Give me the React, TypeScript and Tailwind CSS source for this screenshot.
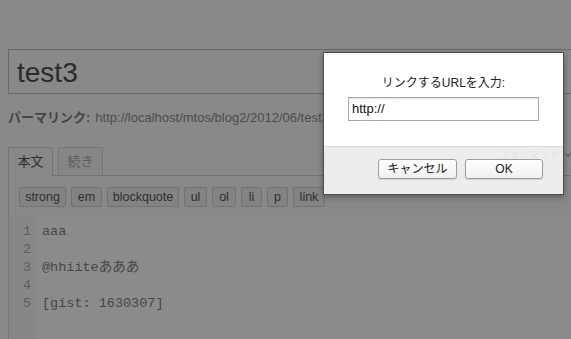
import React from "react";

const tools = [
  { label: "strong", w: "w-[47px]" },
  { label: "em", w: "w-[31px]" },
  { label: "blockquote", w: "w-[72px]" },
  { label: "ul", w: "w-[23px]" },
  { label: "ol", w: "w-[24px]" },
  { label: "li", w: "w-[21px]" },
  { label: "p", w: "w-[21px]" },
  { label: "link", w: "w-[32px]" },
];

const lines = [
  { n: 1, text: "aaa" },
  { n: 2, text: "" },
  { n: 3, text: "@hhiiteあああ" },
  { n: 4, text: "" },
  { n: 5, text: "[gist: 1630307]" },
];

const App = () => {
  return (
    <div
      className="relative w-[571px] h-[339px] overflow-hidden bg-[#898989]"
      style={{ fontFamily: '"Liberation Sans", "Noto Sans CJK JP", sans-serif' }}
    >
      <div className="pl-[8px] pt-[49px]">
        {/* title */}
        <div className="w-[620px] h-[45px] border border-[#6a6a6a] pl-[8px] flex items-center">
          <span className="text-[28px] leading-none text-[#2b2b2b] mt-[2px]">test3</span>
        </div>

        {/* permalink */}
        <div className="mt-[16px] h-[16px] flex items-center text-[13px] whitespace-nowrap">
          <span className="font-bold text-[#464646]">パーマリンク:</span>
          <span className="ml-[5px] text-[#4c4c4c]">http://localhost/mtos/blog2/2012/06/test3.html</span>
        </div>

        {/* tabs */}
        <div className="mt-[20px] flex items-end gap-[5px] h-[29px]">
          <div className="h-[29px] w-[45px] -mb-px relative z-10 border border-b-0 border-[#737373] rounded-t-[2px] bg-[#888888] flex items-center justify-center text-[13px] text-[#2f2f2f]">
            本文
          </div>
          <div className="h-[28px] w-[45px] border border-b-0 border-[#767676] rounded-t-[2px] bg-[#868686] flex items-center justify-center text-[13px] text-[#5c5c5c]">
            続き
          </div>
        </div>

        {/* panel */}
        <div className="border-t border-l border-[#737373] bg-[#888888] w-[620px]">
          <div className="pl-[10px] pt-[11px] pb-[9px] flex gap-[5px]">
            {tools.map((t) => (
              <div
                key={t.label}
                className={`${t.w} h-[20px] flex items-center justify-center border border-[#727272] rounded-[2px] bg-[#838383] text-[12.5px] text-[#2f2f2f]`}
              >
                {t.label}
              </div>
            ))}
          </div>
          <div className="flex h-[130px] bg-[#8b8b8b]">
            <div
              className="w-[27px] bg-[#878787] pt-[7px] pr-[5px] text-right text-[13.5px] leading-[18px] text-[#5f5f5f]"
              style={{ fontFamily: '"Liberation Mono", monospace' }}
            >
              {lines.map((l) => (
                <div key={l.n}>{l.n}</div>
              ))}
            </div>
            <div
              className="pl-[6px] pt-[7px] text-[13.5px] leading-[18px] text-[#474747]"
              style={{ fontFamily: '"Liberation Mono", "Noto Sans CJK JP", monospace' }}
            >
              {lines.map((l) => (
                <div key={l.n} className="h-[18px] whitespace-pre">
                  {l.text}
                </div>
              ))}
            </div>
          </div>
        </div>
      </div>

      {/* select arrow peeking at right edge */}
      <svg className="absolute left-[565px] top-[152px]" width="6" height="6" viewBox="0 0 6 6">
        <path d="M0.5 1.5 L3 4.5 L5.5 1.5" fill="none" stroke="#3c3c3c" strokeWidth="1" />
      </svg>

      {/* prompt dialog */}
      <div className="absolute left-[323px] top-[52px] w-[241px] h-[143px] border border-[#4d4d4d] bg-white flex flex-col shadow-[0_2px_6px_rgba(0,0,0,0.35)]">
        <div className="h-[93px] flex flex-col items-center pt-[22px]">
          <div className="text-[12px] leading-[16px] text-[#222]">リンクするURLを入力:</div>
          <div className="mt-[6px] w-[191px] h-[24px] border border-[#a8a8a8] shadow-[inset_0_1px_1px_rgba(0,0,0,0.12)] flex items-center pl-[3px] text-[13px] text-[#111]">
            http://
          </div>
        </div>
        <div className="relative flex-1 border-t border-[#dadada] bg-[#ededed] flex justify-end items-start pt-[12px] pr-[20px] gap-[8px]">
          <span className="absolute left-[176px] top-[2px] text-[10px] leading-[12px] text-[#e3e3e3] whitespace-nowrap">フォーマット</span>
          <div className="relative w-[79px] h-[20px] border border-[#9e9e9e] rounded-[3px] bg-gradient-to-b from-white to-[#f0f0f0] shadow-[0_1px_1px_rgba(0,0,0,0.12)] flex items-center justify-center text-[12px] text-[#222]">
            キャンセル
          </div>
          <div className="relative w-[78px] h-[20px] border border-[#9e9e9e] rounded-[3px] bg-gradient-to-b from-white to-[#f0f0f0] shadow-[0_1px_1px_rgba(0,0,0,0.12)] flex items-center justify-center text-[12px] text-[#222]">
            OK
          </div>
        </div>
      </div>
    </div>
  );
};

export default App;
